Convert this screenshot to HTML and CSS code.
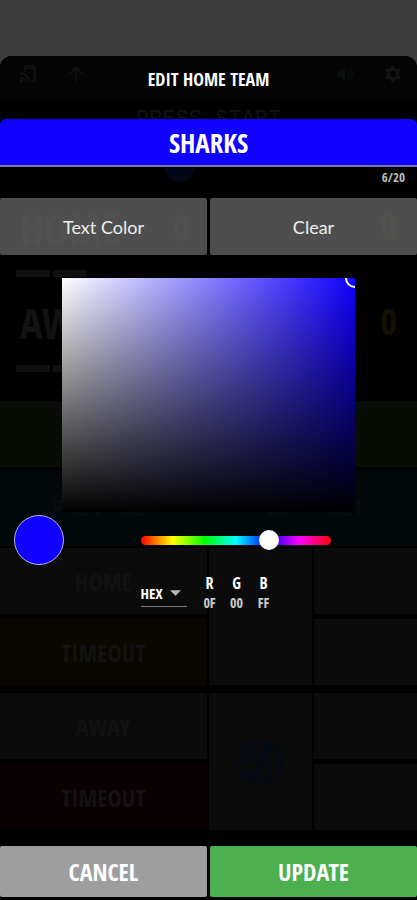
FILE: index.html
```html
<!DOCTYPE html>
<html lang="en">
<head>
<meta charset="utf-8">
<meta name="viewport" content="width=device-width, initial-scale=1">
<title>Edit Home Team</title>
<link rel="stylesheet" href="styles.css">
</head>
<body>
<div class="screen">
  <div class="board" aria-hidden="true">
    <div class="appbar">
      <svg class="icon" viewBox="0 0 24 24"><path d="M8 10V4q0-2 2-2h8q2 0 2 2v15q0 2-2 2h-3M8 5h12M3 11a10 10 0 0 1 10 10M3 16a5 5 0 0 1 5 5"/><circle cx="4" cy="20" r="1"/></svg>
      <svg class="icon" viewBox="0 0 24 24"><path d="M12 21V4M3 13l9-9 9 9"/></svg>
      <span class="spacer"></span>
      <svg class="icon icon-sound" viewBox="0 0 24 24"><path class="solid" d="M3 9v6h4l5 5V4L7 9z"/><path d="M15 8a5 5 0 0 1 0 8M16 4a9 9 0 0 1 0 16"/></svg>
      <svg class="icon" viewBox="0 0 24 24"><path class="solid" fill-rule="evenodd" d="M10 2h4l.5 3 2 1.200 2.800-1.200 2 3.500-2.300 1.800v3.400l2.300 1.800-2 3.500-2.800-1.200-2 1.200L14 22h-4l-.5-3-2-1.200L4.700 19l-2-3.500L5 13.700v-3.400L2.700 8.500l2-3.500 2.800 1.200 2-1.200zM12 8a4 4 0 1 0 0 8 4 4 0 0 0 0-8z"/></svg>
    </div>
    <div class="status">PRESS START</div>
    <div class="serve"><span class="ball"></span></div>
    <div class="team"><span class="name">HOME</span><span class="points">0</span><span class="sets">0</span></div>
    <div class="dashes"><i></i><i></i></div>
    <div class="team"><span class="name">AWAY</span><span class="points"></span><span class="sets">0</span></div>
    <div class="dashes"><i></i><i></i></div>
    <div class="start"></div>
    <div class="setbar"><span>PREV SET</span><span>NEXT SET</span></div>
    <div class="controls">
      <div class="cell">HOME</div><div class="cell tall"></div><div class="cell"></div>
      <div class="cell amber">TIMEOUT</div><div class="cell"></div>
    </div>
    <div class="controls">
      <div class="cell">AWAY</div>
      <div class="cell tall"><svg class="volley" viewBox="0 0 48 48"><circle cx="24" cy="24" r="21"/><path d="M24 24C14 19 13 10 15 5M24 24C24 13 31 6 39 9M24 24c11-5 18-1 21 4M24 24c0 11-8 17-17 12M24 24c9 5 12 12 9 19M18 21C8 21 4 27 4 30M30 19c-1-6 3-9 8-9M25 31c-5 8-10 10-13 9"/></svg></div>
      <div class="cell"></div>
      <div class="cell maroon">TIMEOUT</div><div class="cell"></div>
    </div>
  </div>

  <form class="sheet">
    <h1 class="title">EDIT HOME TEAM</h1>
    <input class="team-name" type="text" aria-label="Team name" maxlength="20" value="SHARKS">
    <div class="counter">6/20</div>
    <div class="pair options">
      <button class="option" type="button">Text Color</button>
      <button class="option" type="button">Clear</button>
    </div>
    <div class="palette"><span class="cursor"></span></div>
    <div class="hue-row">
      <span class="swatch"></span>
      <input class="hue" type="range" aria-label="Hue" min="0" max="360" value="250">
    </div>
    <div class="values">
      <div class="mode">
        <select aria-label="Color format"><option>HEX</option></select>
        <svg class="caret" viewBox="0 0 12 6"><path d="M0 0h12L6 6z"/></svg>
      </div>
      <div class="channel"><label for="r">R</label><input id="r" type="text" value="0F"></div>
      <div class="channel"><label for="g">G</label><input id="g" type="text" value="00"></div>
      <div class="channel"><label for="b">B</label><input id="b" type="text" value="FF"></div>
    </div>
    <div class="pair actions">
      <button class="action cancel" type="button">CANCEL</button>
      <button class="action update" type="submit">UPDATE</button>
    </div>
  </form>
</div>
</body>
</html>
```
FILE: styles.css
```css
* { box-sizing: border-box; }

body {
  margin: 0;
  background: #3c3c3c;
  color: #fff;
  font-family: "Open Sans Condensed", "Roboto Condensed", sans-serif;
}

button, input, select {
  margin: 0;
  padding: 0;
  border: 0;
  border-radius: 0;
  color: inherit;
  font-family: inherit;
}

.screen {
  display: grid;
  grid-template-columns: minmax(0, 1fr);
  min-height: 100vh;
  padding-top: 56px;
}

.board, .sheet { grid-area: 1 / 1; }

/* Scoreboard, dimmed behind the sheet */
.board {
  overflow: hidden;
  border-radius: 12px 12px 0 0;
  background: #000;
  color: #121212;
}

.appbar {
  display: flex;
  align-items: center;
  gap: 28px;
  height: 44px;
  padding: 0 14px 8px 18px;
  background: #040404;
}

.icon {
  width: 20px;
  height: 20px;
  fill: none;
  stroke: #131313;
  stroke-width: 2;
}

.icon .solid { fill: #131313; stroke: none; }
.icon-sound { stroke: #07100d; }
.icon-sound .solid { fill: #07100d; }
.spacer { flex: 1; }

.status {
  height: 62px;
  padding-top: 6px;
  text-align: center;
  font: 22px/28px "Liberation Mono", monospace;
}

.serve { height: 45px; padding-left: 165px; }

.ball {
  display: block;
  width: 30px;
  height: 30px;
  margin-top: -10px;
  border-radius: 50%;
  background: #030817;
}

.team {
  display: flex;
  align-items: center;
  height: 60px;
  padding: 0 20px;
  font-weight: bold;
}

.name { width: 153px; font-size: 42px; }
.points { flex: 1; font-size: 36px; }
.sets { font-size: 36px; line-height: 40px; color: #151000; }

.dashes {
  display: flex;
  gap: 3px;
  height: 35px;
  padding: 13px 16px 0;
}

.dashes i { width: 34px; height: 7px; background: #101010; }
.start { height: 66px; margin-top: 14px; background: #070c05; }

.setbar {
  display: flex;
  justify-content: space-around;
  height: 76px;
  margin: 3px 0 2px;
  padding-top: 26px;
  background: #02080a;
  color: #070d0f;
  font: 22px/28px "Liberation Mono", monospace;
}

.controls {
  display: grid;
  grid-template-columns: 2fr 1fr 1fr;
  grid-template-rows: 66px 66px;
  gap: 5px 2px;
  margin-bottom: 8px;
}

.cell {
  display: flex;
  align-items: center;
  justify-content: center;
  background: #0b0b0b;
  font-size: 24px;
  color: #121212;
}

.tall { grid-row: span 2; }
.amber { background: #0a0700; }
.maroon { background: #0a0003; }

.volley {
  width: 48px;
  height: 48px;
  fill: none;
  stroke: #060a14;
  stroke-width: 4;
}

/* Edit sheet */
.sheet {
  position: relative;
  display: flex;
  flex-direction: column;
  padding-bottom: 3px;
}

.title {
  margin: 0;
  text-align: center;
  font-size: 18px;
  line-height: 46px;
  height: 63px;
}

.team-name {
  width: 100%;
  height: 48px;
  border-bottom: 2px solid #7777a8;
  border-radius: 6px 6px 0 0;
  background: #0f00ff;
  text-align: center;
  font-size: 27px;
  font-weight: bold;
}

.counter {
  height: 31px;
  padding-right: 12px;
  text-align: right;
  font-size: 13px;
  line-height: 20px;
  color: #bbb;
}

.pair {
  display: grid;
  grid-template-columns: 1fr 1fr;
  gap: 3px;
}

.option {
  height: 57px;
  border-radius: 2px;
  background: rgba(98, 98, 98, .8);
  color: #eee;
  font-family: Lato, sans-serif;
  font-size: 18px;
}

.palette {
  position: relative;
  overflow: hidden;
  height: 234px;
  margin: 23px 62px 0;
  background:
    linear-gradient(to bottom, transparent, #000),
    linear-gradient(to right, #fff, #0f00ff);
}

.cursor {
  position: absolute;
  top: -10px;
  right: -10px;
  width: 20px;
  height: 20px;
  border: 2px solid #fff;
  border-radius: 50%;
}

.hue-row {
  display: flex;
  align-items: center;
  justify-content: space-between;
  margin-top: 3px;
  padding: 0 86px 0 14px;
}

.swatch {
  width: 50px;
  height: 50px;
  border: 1px solid #b5b5d8;
  border-radius: 50%;
  background: #0f00ff;
}

.hue {
  appearance: none;
  width: 60%;
  max-width: 190px;
  height: 9px;
  border-radius: 5px;
  background: linear-gradient(to right, #f00, #ff0, #0f0, #0ff, #00f, #f0f, #f00);
}

.hue::-webkit-slider-thumb {
  appearance: none;
  width: 20px;
  height: 20px;
  border-radius: 50%;
  background: #fff;
}

.values {
  display: flex;
  align-items: flex-end;
  justify-content: center;
  gap: 7px;
  margin-top: 9px;
  padding-right: 3px;
}

.mode {
  display: flex;
  align-items: center;
  width: 46px;
  height: 28px;
  margin-right: 6px;
  margin-bottom: 5px;
  border-bottom: 1px solid #777;
}

.mode select {
  appearance: none;
  width: 29px;
  background: transparent;
  font-size: 15px;
  font-weight: bold;
}

.caret { width: 11px; height: 6px; fill: #bbb; }

.channel {
  display: flex;
  flex-direction: column;
  align-items: center;
  width: 20px;
  font-size: 16px;
  line-height: 18px;
  font-weight: bold;
}

.channel input {
  width: 100%;
  height: 20px;
  background: transparent;
  text-align: center;
  font-size: 14px;
  color: #ccc;
}

.actions { margin-top: auto; }

.action {
  height: 51px;
  border-radius: 2px;
  font-size: 24px;
  font-weight: bold;
}

.cancel { background: #9e9e9e; }
.update { background: #4caf50; }
```
